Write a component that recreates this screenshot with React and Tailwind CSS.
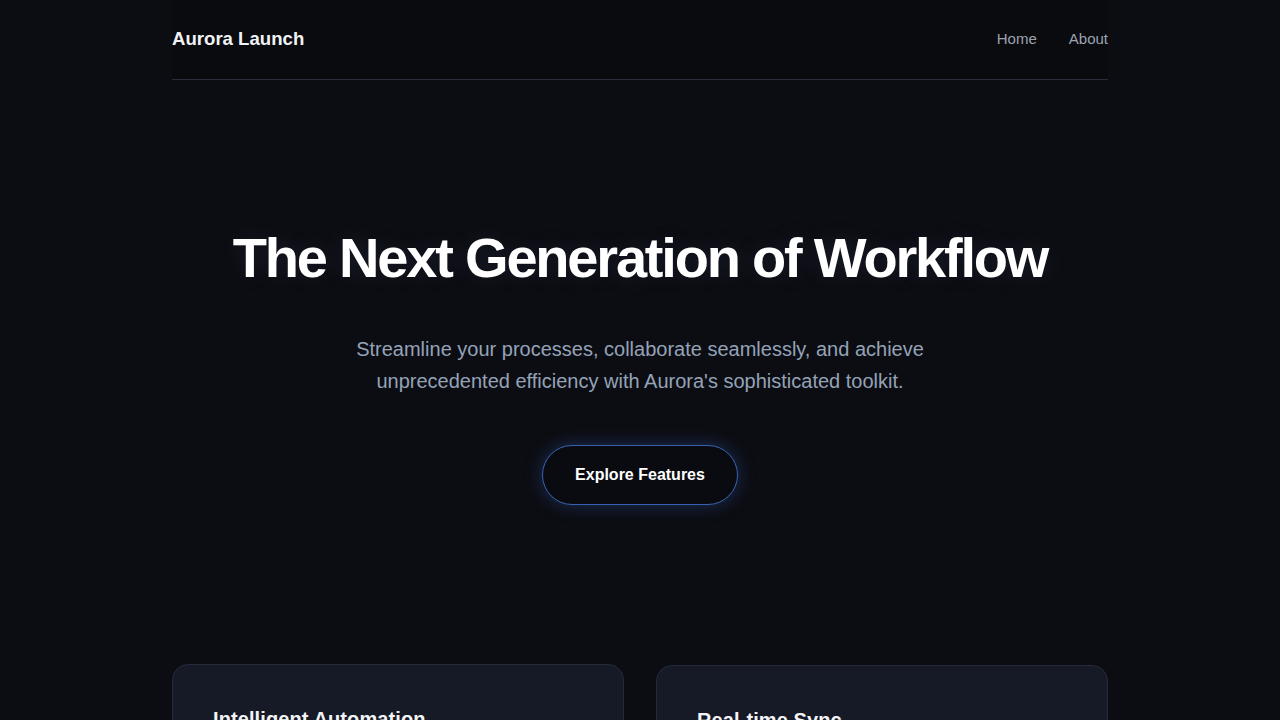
export default function App() {
	const features = [
		{ title: 'Intelligent Automation', offset: '' },
		{ title: 'Real-time Sync', offset: 'mt-px' },
	];

	return (
		<div
			className="min-h-screen bg-[#0c0d12] text-white overflow-hidden"
			style={{ fontFamily: '"Liberation Sans", Arial, sans-serif' }}
		>
			<div className="mx-auto w-[936px]">
				<header className="h-[80px] pb-px flex items-center justify-between bg-[#0a0b0f] border-b border-[#2a2d3a]">
					<div className="text-[18.6px] font-bold text-[#f1f2f5]">Aurora Launch</div>
					<nav className="flex items-center gap-8 text-[15px] text-[#9ca3af]">
						<a href="#">Home</a>
						<a href="#">About</a>
					</nav>
				</header>

				<section className="flex flex-col items-center text-center pt-[145px]">
					<h1 className="text-[56px] leading-[66px] font-bold tracking-[-2.2px] text-white [text-shadow:0_0_24px_rgba(148,163,255,0.12)]">
						The Next Generation of Workflow
					</h1>
					<p className="mt-[42px] max-w-[580px] text-[20px] leading-[32px] text-[#94a3b8]">
						Streamline your processes, collaborate seamlessly, and achieve unprecedented efficiency with Aurora's sophisticated toolkit.
					</p>
					<button className="mt-12 h-[60px] px-8 rounded-full border border-[#3563b0] bg-[#0a0b10] text-base font-bold text-white shadow-[0_0_18px_rgba(59,110,220,0.35)]">
						Explore Features
					</button>
				</section>

				<section className="grid grid-cols-2 gap-8 mt-[159px]">
					{features.map((f) => (
						<div
							key={f.title}
							className={`rounded-2xl border border-[#262a3b] bg-[#161926] p-10 h-[240px] ${f.offset}`}
						>
							<h3 className="text-[20px] leading-[28px] font-bold tracking-[0.1px] text-[#f3f4f6]">{f.title}</h3>
						</div>
					))}
				</section>
			</div>
		</div>
	);
}
